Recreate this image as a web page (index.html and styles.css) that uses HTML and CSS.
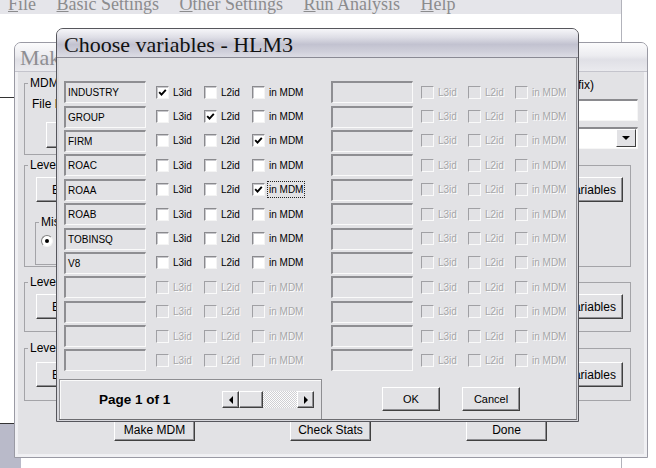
FILE: index.html
```html
<!DOCTYPE html>
<html lang="en">

<head>
  <meta charset="UTF-8">
  <meta name="viewport" content="width=device-width, initial-scale=1.0">
  <title>HLM - Choose variables</title>
  <link rel="stylesheet" href="styles.css">
</head>

<body>
  <!-- Main HLM window behind the dialogs -->
  <div class="app">
    <nav class="menubar">
      <span><u>F</u>ile</span>
      <span><u>B</u>asic Settings</span>
      <span><u>O</u>ther Settings</span>
      <span><u>R</u>un Analysis</span>
      <span><u>H</u>elp</span>
    </nav>
    <div class="app-blank"></div>
    <div class="app-panel"></div>
    <div class="app-foot"></div>
  </div>

  <!-- Make MDM dialog (inactive) -->
  <section class="win make">
    <div class="caption">Make MDM - HLM3</div>
    <div class="client">
      <div class="top-row">
        <fieldset class="group mdm">
          <legend>MDM template file</legend>
          <div class="lbl">File Name:</div>
          <button class="btn open">Open mdmt file</button>
        </fieldset>
        <div class="mdm-name">
          <div class="lbl"><span>MDM File Name (use .mdm suffix)</span></div>
          <div class="edit"></div>
          <div class="combo"><span class="combo-btn"><i class="tri-down"></i></span></div>
        </div>
      </div>

      <fieldset class="group level l1">
        <legend>Level-1 Specification</legend>
        <div class="level-row">
          <button class="btn">Browse</button>
          <button class="btn">Choose Variables</button>
        </div>
        <fieldset class="group missing">
          <legend>Missing Data?</legend>
          <span class="radio"></span>
        </fieldset>
      </fieldset>

      <fieldset class="group level l2">
        <legend>Level-2 Specification</legend>
        <div class="level-row">
          <button class="btn">Browse</button>
          <button class="btn">Choose Variables</button>
        </div>
      </fieldset>

      <fieldset class="group level l3">
        <legend>Level-3 Specification</legend>
        <div class="level-row">
          <button class="btn">Browse</button>
          <button class="btn">Choose Variables</button>
        </div>
      </fieldset>

      <div class="actions">
        <button class="btn">Make MDM</button>
        <button class="btn">Check Stats</button>
        <button class="btn">Done</button>
      </div>
    </div>
  </section>

  <!-- Choose variables dialog (active) -->
  <section class="win choose">
    <div class="caption">Choose variables - HLM3</div>
    <div class="client">
      <div class="var-grid">
        <div class="var-col" id="colLeft"></div>
        <div class="var-col right" id="colRight"></div>
      </div>

      <div class="footer">
        <div class="pager">
          <span class="page-text">Page 1 of 1</span>
          <div class="scroll">
            <span class="sb-btn"><i class="tri-left"></i></span>
            <span class="sb-thumb"></span>
            <span class="sb-track"></span>
            <span class="sb-btn"><i class="tri-right"></i></span>
          </div>
        </div>
        <button class="btn ok">OK</button>
        <button class="btn cancel">Cancel</button>
      </div>
    </div>
  </section>

  <script>
    // Variables read from the level-1 file, with their flags
    const vars = [
      { name: 'INDUSTRY', on: [1, 0, 0] },
      { name: 'GROUP', on: [0, 1, 0] },
      { name: 'FIRM', on: [0, 0, 1] },
      { name: 'ROAC', on: [0, 0, 0] },
      { name: 'ROAA', on: [0, 0, 1], focus: 2 },
      { name: 'ROAB', on: [0, 0, 0] },
      { name: 'TOBINSQ', on: [0, 0, 0] },
      { name: 'V8', on: [0, 0, 0] }
    ];
    const flags = ['L3id', 'L2id', 'in MDM'];
    const rowsPerCol = 12;
    const tick = '<svg width="9" height="9" viewBox="0 0 9 9"><path d="M1.2 4.2 L3.5 6.6 L7.8 1.8" fill="none" stroke="#000" stroke-width="1.9"/></svg>';

    function rowHtml(v) {
      const opts = flags.map((f, i) => {
        const checked = v && v.on[i];
        const focus = v && v.focus === i ? ' focus' : '';
        return `<span class="opt"><span class="box">${checked ? tick : ''}</span><span class="opt-text${focus}">${f}</span></span>`;
      }).join('');
      return `<div class="var-row${v ? '' : ' off'}"><div class="field">${v ? v.name : ''}</div>${opts}</div>`;
    }

    let left = '';
    let right = '';
    for (let i = 0; i < rowsPerCol; i++) {
      left += rowHtml(vars[i]);
      right += rowHtml(vars[i + rowsPerCol]);
    }
    document.getElementById('colLeft').innerHTML = left;
    document.getElementById('colRight').innerHTML = right;
  </script>
</body>

</html>
```

FILE: styles.css
```css
/* Classic Windows look for the HLM dialogs */
* {
  box-sizing: border-box;
}

body {
  margin: 0;
  width: 656px;
  height: 468px;
  overflow: hidden;
  position: relative;
  background: #fff;
  font-family: 'Liberation Sans', Arial, sans-serif;
  color: #000;
}

/* ---------- main window ---------- */
.app {
  position: absolute;
  left: 0;
  top: 0;
  width: 622px;
  height: 468px;
  border-right: 1px solid #b2b3bb;
}

.menubar {
  height: 14px;
  background: #e5e5ea;
  display: flex;
  gap: 20.5px;
  padding-left: 8px;
  font: 18px 'Liberation Serif', 'Times New Roman', serif;
  line-height: 8px;
  color: #8c8c8e;
}

.app-blank {
  height: 83px;
}

.app-panel {
  height: 327px;
  border-top: 1px solid #333;
  border-bottom: 1px solid #333;
}

.app-foot {
  width: 21px;
  height: 44px;
  background: #b9bac9;
}

/* ---------- window frames ---------- */
.win {
  position: absolute;
  border: 1px solid #9a9aa4;
  border-radius: 7px 7px 0 0;
  display: flex;
  flex-direction: column;
}

.caption {
  font: 22px 'Liberation Serif', 'Times New Roman', serif;
  line-height: 24px;
  border-radius: 6px 6px 0 0;
  white-space: nowrap;
  overflow: hidden;
}

.client {
  flex: 1;
  background: #e2e2e5;
}

/* ---------- Make MDM ---------- */
.make {
  left: 14px;
  top: 42px;
  width: 634px;
  height: 416px;
  background: #f0f0f3;
  font-size: 12px;
}

.make .caption {
  height: 29px;
  padding: 3px 0 0 5px;
  color: #8e8e92;
  background: linear-gradient(#fbfbfc, #ececf0 45%, #e0e0e6 60%, #eaeaee);
  border-bottom: 1px solid #c4c4cc;
}

.make .client {
  margin: 0 3px 3px 3px;
  padding: 4px 3px 0 6px;
}

.group {
  margin: 0;
  padding: 0;
  border: 1px solid #a4a4a8;
  min-width: 0;
}

.group legend {
  padding: 0 2px;
  line-height: 14px;
  white-space: nowrap;
}

.lbl {
  line-height: 14px;
  white-space: nowrap;
}

.top-row {
  display: flex;
  gap: 10px;
}

.mdm {
  width: 446px;
  height: 79px;
  padding: 7px 0 0 7px;
}

.mdm legend {
  margin-left: -4px;
}

.mdm .open {
  margin: 11px 0 0 14px;
  width: 110px;
  height: 26px;
}

.mdm-name {
  width: 158px;
  padding-top: 2px;
}

/* long label keeps its right end in place and runs off to the left */
.mdm-name .lbl {
  display: flex;
  justify-content: flex-end;
  padding-right: 44px;
}

.mdm-name .lbl span {
  flex: none;
}

.edit,
.combo {
  height: 22px;
  background: #fff;
  border-style: solid;
  border-width: 2px 1px 1px 2px;
  border-color: #8a8a8e #f6f6f6 #f6f6f6 #8a8a8e;
}

.edit {
  margin-top: 7px;
}

.combo {
  margin-top: 6px;
  display: flex;
  justify-content: flex-end;
  padding: 0 1px 1px 0;
}

.combo-btn {
  width: 20px;
  height: 18px;
  background: #e2e2e5;
  border: 1px solid;
  border-color: #fff #404040 #404040 #fff;
  display: flex;
  align-items: center;
  justify-content: center;
}

.tri-down {
  border-left: 4px solid transparent;
  border-right: 4px solid transparent;
  border-top: 4px solid #000;
}

.level {
  width: 607px;
  padding: 0 7px 0 11px;
}

.level > legend {
  margin-left: -8px;
}

.l1 {
  margin-top: 3px;
  height: 109px;
}

.l2 {
  margin-top: 8px;
  height: 57px;
}

.l3 {
  margin-top: 9px;
  height: 60px;
}

.level-row {
  display: flex;
  justify-content: space-between;
  margin-top: 5px;
}

.l3 .level-row {
  margin-top: 7px;
}

.level-row .btn {
  height: 25px;
  width: 72px;
}

.level-row .btn + .btn {
  width: 108px;
}

.missing {
  margin: 13px 0 0 -1px;
  width: 170px;
  height: 50px;
  padding: 6px 0 0 5px;
}

.missing legend {
  margin-left: -2px;
}

.radio {
  display: block;
  width: 12px;
  height: 12px;
  border-radius: 50%;
  background: #fff;
  border: 1px solid;
  border-color: #808080 #f4f4f4 #f4f4f4 #808080;
  position: relative;
}

.radio::after {
  content: '';
  position: absolute;
  left: 3px;
  top: 3px;
  width: 4px;
  height: 4px;
  border-radius: 50%;
  background: #000;
}

.actions {
  display: flex;
  gap: 95px;
  margin-top: 17px;
  padding-left: 90px;
}

.actions .btn {
  width: 81px;
  height: 23px;
}

/* ---------- buttons ---------- */
.btn {
  font-family: inherit;
  font-size: inherit;
  color: #000;
  background: #e2e2e5;
  border: 1px solid;
  border-color: #fff #404040 #404040 #fff;
  box-shadow: inset -1px -1px #8e8e92;
  padding: 0;
  white-space: nowrap;
}

/* ---------- Choose variables ---------- */
.choose {
  left: 56px;
  top: 28px;
  width: 523px;
  height: 394px;
  border-color: #56565c;
  background: #d8d8dd;
}

.choose .caption {
  height: 29px;
  padding: 4px 0 0 7px;
  color: #111;
  background: linear-gradient(#f6f6f9, #dedee6 30%, #c2c2d0 55%, #cfcfda 80%, #dcdce4);
  border-bottom: 1px solid #8a8a94;
}

.choose .client {
  margin: 0 1px 1px 2px;
  padding-top: 22px;
  border-right: 1px solid #8c8c90;
  border-bottom: 1px solid #6c6c70;
  display: flex;
  flex-direction: column;
}

.var-grid {
  display: flex;
  padding-left: 5px;
}

.var-col {
  flex: none;
  width: 267px;
}

.var-row {
  display: flex;
  align-items: center;
  height: 24.4px;
  font-size: 10px;
}

.field {
  flex: none;
  width: 82px;
  height: 22px;
  margin-right: 10px;
  padding-left: 2px;
  line-height: 19px;
  border-style: solid;
  border-width: 2px 1px 1px 2px;
  border-color: #8e8e92 #fafafa #fafafa #8e8e92;
  background: #e2e2e5;
}

.right .field {
  margin-right: 8px;
}

.opt {
  flex: none;
  width: 48px;
  display: flex;
  align-items: center;
  white-space: nowrap;
}

.right .opt {
  width: 47px;
}

.box {
  flex: none;
  width: 13px;
  height: 13px;
  margin-right: 4px;
  background: #fff;
  border: 1px solid;
  border-color: #8a8a8e #f4f4f4 #f4f4f4 #8a8a8e;
  box-shadow: inset 1px 1px #c8c8cc;
  display: flex;
  align-items: center;
  justify-content: center;
}

.opt-text {
  line-height: 13px;
}

.opt-text.focus {
  outline: 1px dotted #222;
  outline-offset: 1px;
}

.off .box {
  background: #e2e2e5;
  border-color: #a0a0a4 #fafafa #fafafa #a0a0a4;
  box-shadow: none;
}

.off .opt-text {
  color: #a6a6a8;
  text-shadow: 1px 1px 0 #fff;
}

.footer {
  margin-top: auto;
  display: flex;
  align-items: center;
  font-size: 11px;
}

.pager {
  width: 263px;
  height: 40px;
  display: flex;
  align-items: center;
  border: 1px solid #8e8e92;
  border-bottom: none;
  box-shadow: inset 1px 1px #fafafa;
}

.page-text {
  margin-left: 39px;
  font-weight: bold;
  font-size: 13.5px;
}

.scroll {
  margin-left: auto;
  margin-right: 7px;
  width: 92px;
  height: 17px;
  display: flex;
}

.sb-btn,
.sb-thumb {
  width: 17px;
  background: #e2e2e5;
  border: 1px solid;
  border-color: #fff #404040 #404040 #fff;
  box-shadow: inset -1px -1px #8e8e92;
  display: flex;
  align-items: center;
  justify-content: center;
}

.sb-thumb {
  width: 24px;
}

.sb-track {
  flex: 1;
  background: repeating-conic-gradient(#fdfdfd 0 25%, #cfcfd3 0 50%) 0 0 / 2px 2px;
}

.tri-left,
.tri-right {
  border-top: 4px solid transparent;
  border-bottom: 4px solid transparent;
}

.tri-left {
  border-right: 4px solid #000;
}

.tri-right {
  border-left: 4px solid #000;
}

.ok,
.cancel {
  width: 58px;
  height: 24px;
}

.ok {
  margin-left: 60px;
}

.cancel {
  margin-left: 22px;
}
```
